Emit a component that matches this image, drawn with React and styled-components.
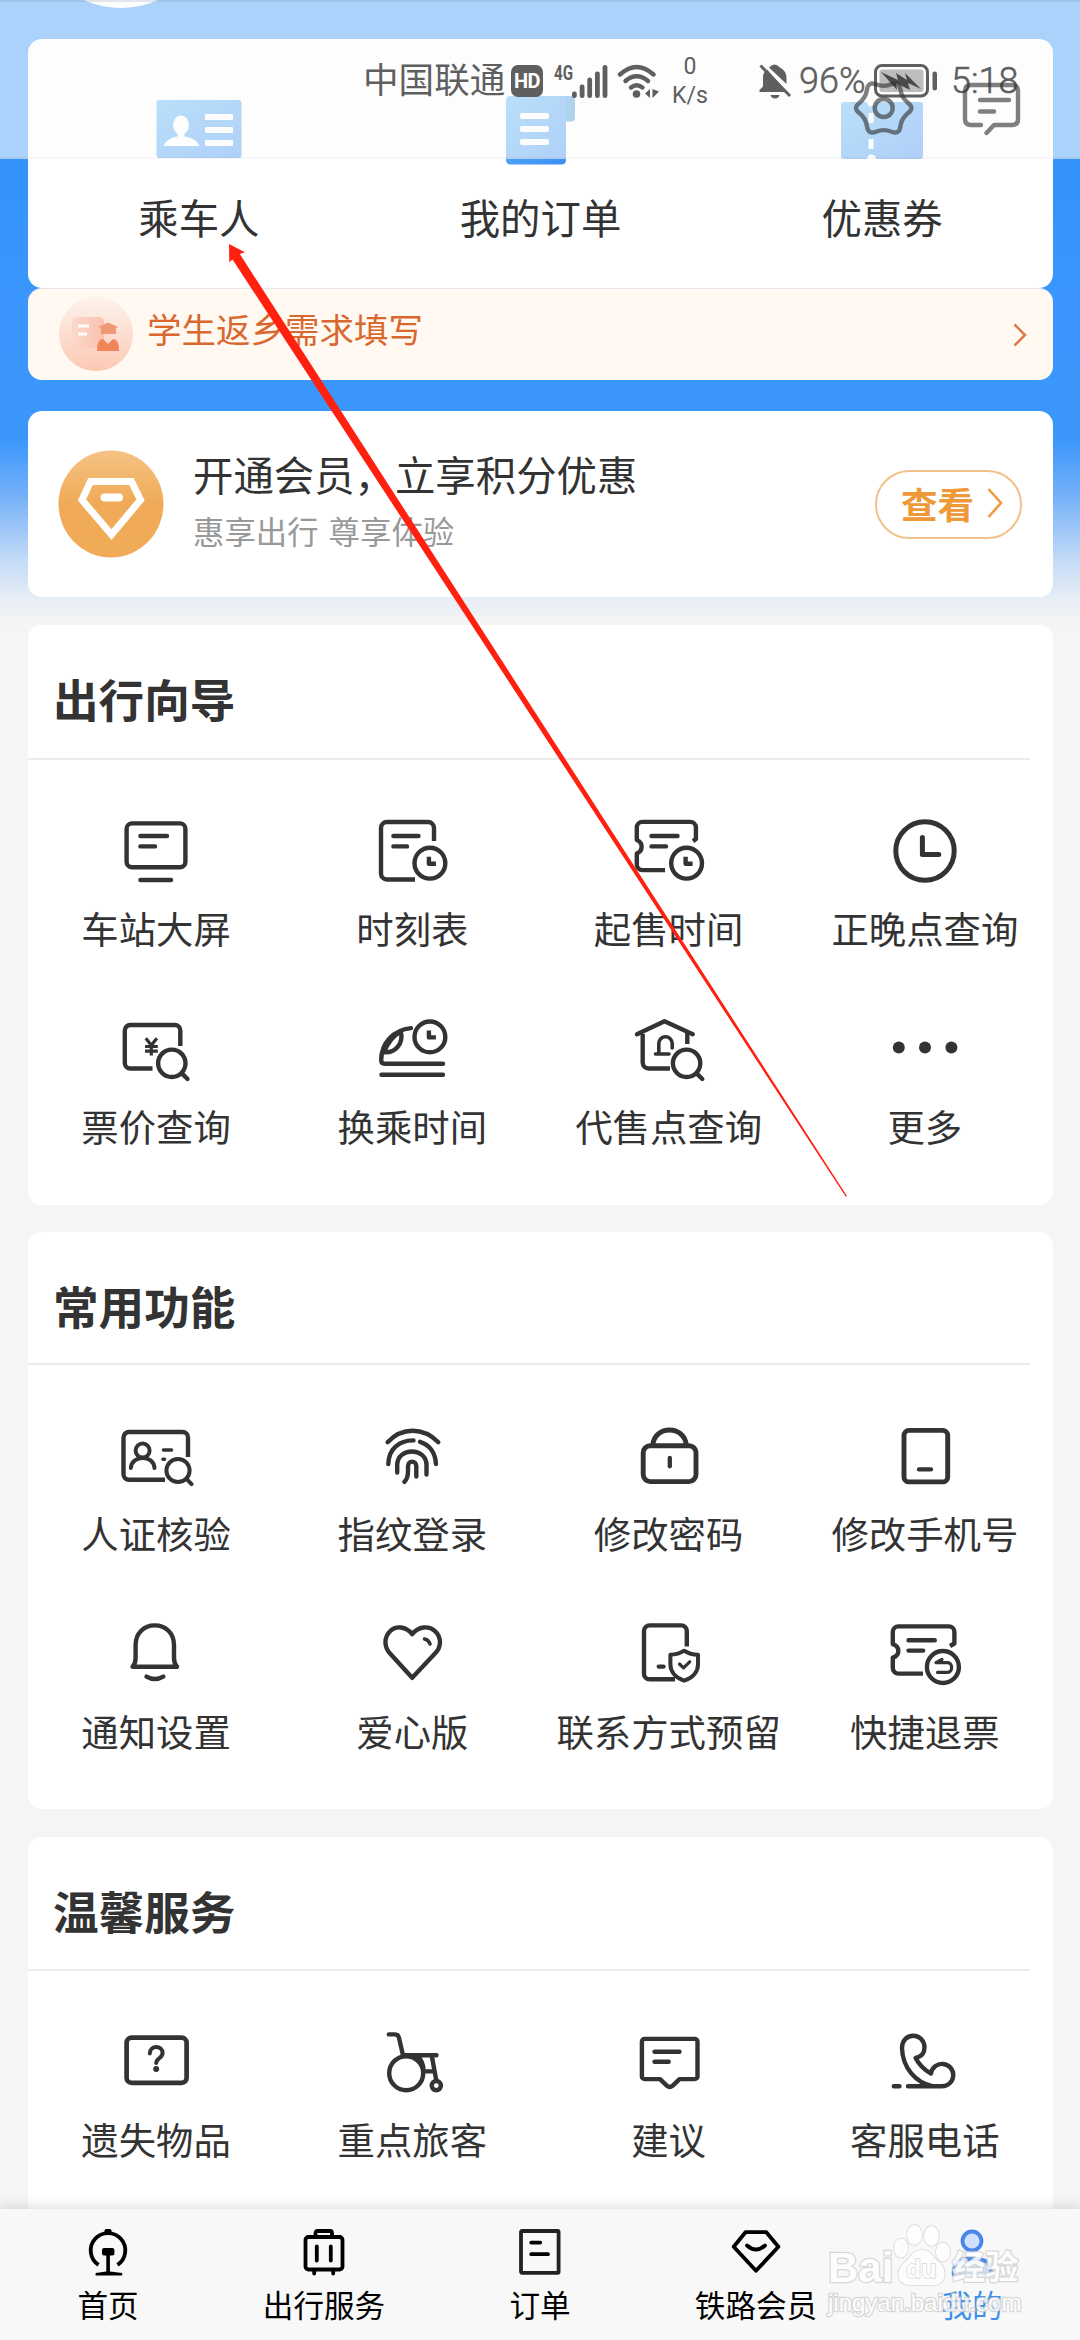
import styled, { createGlobalStyle } from 'styled-components';

const GlobalStyle = createGlobalStyle`
  * {
    box-sizing: border-box;
  }
  body {
    margin: 0;
    background-color: #f5f5f5;
    font-family: 'Noto Sans CJK SC', sans-serif;
    color: #333;
  }
`;

/* ---------- icons ---------- */

const LineIcon = styled.svg.attrs({ viewBox: '0 0 72 72' })`
  width: 72px;
  height: 72px;
  overflow: visible;
  fill: none;
  stroke: #333;
  stroke-width: ${props => props.$weight || 4.4};
  stroke-linecap: round;
  stroke-linejoin: round;
`;

const MiniClock = ({ x, y }) => (
  <g>
    <circle cx={x} cy={y} r="15.4" />
    <path d={`M${x - 1} ${y - 6.5}v7h7`} strokeLinecap="butt" />
  </g>
);

const Magnifier = ({ x, y, r = 13.7 }) => (
  <g>
    <circle cx={x} cy={y} r={r} />
    <path d={`M${x + r * 0.75} ${y + r * 0.75}L${x + r + 2} ${y + r + 2}`} />
  </g>
);

const ScreenIcon = () => (
  <LineIcon>
    <rect x="6.6" y="8.4" width="58.8" height="43.8" rx="5.5" />
    <path d="M20.4 21H47M20.4 31.4H35M20.4 65H51" />
  </LineIcon>
);

const TimetableIcon = () => (
  <LineIcon>
    <path d="M58 26V13a6 6 0 0 0-6-6H11a6 6 0 0 0-6 6v45.500a6 6 0 0 0 6 6H39" strokeLinecap="butt" />
    <path d="M17.400 21H42.500M17.400 31.400H31" />
    <MiniClock x={53.900} y={48.200} />
  </LineIcon>
);

const SaleTimeIcon = () => (
  <LineIcon>
    <path d="M60 26.200L62.900 24V12.500a5.600 5.600 0 0 0-5.600-5.600H9.400a5.600 5.600 0 0 0-5.600 5.600V25c6.400 2.500 6.400 11 0 13.500V49.500a5.600 5.600 0 0 0 5.600 5.600H32" strokeLinecap="butt" />
    <path d="M18.500 21H44.500M18.500 31.400H33" />
    <MiniClock x={53.600} y={48.200} />
  </LineIcon>
);

const ClockIcon = () => (
  <LineIcon $weight={5}>
    <circle cx="36" cy="36" r="29.200" />
    <path d="M33.400 22.500V39.400H49.800" />
  </LineIcon>
);

const PriceIcon = () => (
  <LineIcon>
    <path d="M60.300 33V17.500a5.500 5.500 0 0 0-5.500-5.500H10.300a5.500 5.500 0 0 0-5.500 5.500V50a5.500 5.500 0 0 0 5.500 5.500H32.500" strokeLinecap="butt" />
    <path d="M25.800 25.200L31.300 32.300L36.900 25.200M31.300 32.300V42.500M25 33.500H37.800M25 38.200H37.800" strokeWidth="3.200" strokeLinecap="butt" />
    <Magnifier x={51.800} y={50.300} />
  </LineIcon>
);

const TransferIcon = () => (
  <LineIcon>
    <path d="M35 15.100C17 17 5.200 30 5.200 47c0 2.500 1.300 3.700 3.600 3.700H67M5.400 61.800H67" />
    <path d="M24.800 18.500C28 31 18.500 40.500 8 39.300C11 31.500 16.500 23 24.800 18.500" />
    <MiniClock x={53.900} y={23.900} />
  </LineIcon>
);

const AgencyIcon = () => (
  <LineIcon>
    <path d="M4 21.200L31.500 8.300L59.800 21.200" />
    <path d="M9.700 21V49.500a6 6 0 0 0 6 6H37M54.300 20V31" strokeLinecap="butt" />
    <path d="M25.800 40V30.500a6.700 6.700 0 0 1 13.400 0V35M22.500 41H36" strokeWidth="3.600" />
    <Magnifier x={53.600} y={50.300} />
  </LineIcon>
);

const MoreIcon = () => (
  <LineIcon>
    <g fill="#333" stroke="none">
      <circle cx="9.800" cy="34.600" r="6" />
      <circle cx="36" cy="34.600" r="6" />
      <circle cx="62.400" cy="34.600" r="6" />
    </g>
  </LineIcon>
);

const VerifyIcon = () => (
  <LineIcon $weight={4}>
    <path d="M68 37V17.500a5.500 5.500 0 0 0-5.500-5.500H9a5.500 5.500 0 0 0-5.500 5.500V54.300a5.500 5.500 0 0 0 5.500 5.500H45" strokeLinecap="butt" strokeWidth="4.400" />
    <circle cx="22.600" cy="30.600" r="7" />
    <path d="M10.800 48C12 34.500 33.500 34.500 34.500 48" />
    <path d="M43.500 30H51.500M43 39.300h1.500" strokeWidth="3.600" />
    <Magnifier x={58} y={50.500} r={11.600} />
  </LineIcon>
);

const FingerprintIcon = () => (
  <LineIcon>
    <path d="M11.600 22.200C26 7 47 7 62.300 22.200" />
    <path d="M12.300 44C12.500 29 23 20.300 37.500 20.400M44 21.800C53.500 24.500 59.500 33 59.900 44" />
    <path d="M21.200 52.500V45c0-18 29.300-18 29.300 0v9.500" />
    <path d="M28.400 61.800C31.500 59 32 55 32 51V46c0-5.800 8.300-5.800 8.300 0V56.500" />
  </LineIcon>
);

const LockIcon = () => (
  <LineIcon $weight={4.900}>
    <rect x="10.200" y="25.800" width="52.800" height="35.800" rx="7" />
    <path d="M19.800 25C21.500 5 51.500 5 53.300 25" />
    <path d="M36.800 37.800V46.300" strokeWidth="4.300" />
  </LineIcon>
);

const PhoneIcon = () => (
  <LineIcon $weight={4.900}>
    <rect x="15" y="10.400" width="43.700" height="51.500" rx="5" />
    <path d="M30 49.400H42" strokeWidth="4.300" />
  </LineIcon>
);

const BellIcon = () => (
  <LineIcon>
    <path d="M12.600 48.800C15.600 45.500 15.600 43 15.600 40V27C15.600 15 24 7.400 34.800 7.400S54 15 54 27V40C54 43 54 45.500 57 48.800Z" />
    <path d="M26.500 58.600Q34.800 63.500 43.300 58.600" />
  </LineIcon>
);

const HeartIcon = () => (
  <LineIcon>
    <path d="M36.200 16.200C30 8.500 20 7.300 14.500 12.800C7.500 19.500 8 29.500 14.500 36L36.200 59.800L58.500 36C65.500 29.500 66 19.500 58.800 12.800C52.500 7.300 42.500 8.500 36.200 16.200Z" />
    <path d="M48.500 21Q52.800 22 54 26" strokeWidth="3.600" />
  </LineIcon>
);

const ContactIcon = () => (
  <LineIcon>
    <path d="M53.800 28.500V13a5.600 5.600 0 0 0-5.600-5.600H16.600a5.600 5.600 0 0 0-5.600 5.600V55.700a5.600 5.600 0 0 0 5.600 5.600H42" strokeLinecap="butt" />
    <path d="M25.800 48.600H30.500" />
    <path d="M51.200 32.700C47 35.500 42 36.700 37.400 36.800V46.500C37.400 54 43 60 51.200 62.700C59.500 60 65 54 65 46.500V36.800C60 36.700 55.500 35.500 51.200 32.700Z" strokeWidth="4" />
    <path d="M46.500 46L50.500 49.800L56.700 43.800" strokeWidth="3.200" />
  </LineIcon>
);

const RefundIcon = () => (
  <LineIcon>
    <path d="M61 28L65.400 25.500V14a5.600 5.600 0 0 0-5.600-5.600H9.400a5.600 5.600 0 0 0-5.600 5.600V26.200c7.400 2.500 7.400 11 0 13.500V50a5.600 5.600 0 0 0 5.600 5.600H34" strokeLinecap="butt" />
    <path d="M19.500 22.200H45.800M19.500 32.600H34.200" />
    <circle cx="53.900" cy="49" r="16" />
    <path d="M47.500 44.600H58.500c5.500 0 5.500 9.800 0 9.800H48.500M47 44.600L53 41.500" strokeWidth="3.200" />
  </LineIcon>
);

const LostIcon = () => (
  <LineIcon $weight={4.700}>
    <rect x="6.600" y="11.600" width="60" height="45.200" rx="5" />
    <path d="M29.800 27.500C29.800 19 42.600 19 42.600 27C42.600 32 36.200 32.500 36.200 37" strokeWidth="4" />
    <circle cx="36.200" cy="43" r="3" fill="#333" stroke="none" />
  </LineIcon>
);

const WheelchairIcon = () => (
  <LineIcon>
    <circle cx="30.200" cy="47.200" r="17" />
    <path d="M12.800 8.400H19c2.800 0 3.500 1.200 4 3.500L27 29.200H60.500M55.800 30L60.200 54M48 45.400H57.500M42 30.500C45.500 34 47 38 47.500 43" />
    <circle cx="60.300" cy="59.600" r="4.600" />
  </LineIcon>
);

const AdviceIcon = () => (
  <LineIcon>
    <path d="M11.600 12.900H61.800a2.700 2.700 0 0 1 2.700 2.700V50.400a2.700 2.700 0 0 1-2.700 2.700H46.500L39.500 59.800Q36.700 62 34 59.800L27 53.100H11.600a2.700 2.700 0 0 1-2.700-2.700V15.600a2.700 2.700 0 0 1 2.700-2.700Z" />
    <path d="M21.500 25.700H46.500M21.500 35.700H35.700" />
  </LineIcon>
);

const CallIcon = () => (
  <LineIcon>
    <path d="M19 60.300H53A11.200 11.200 0 1 0 42 47.500C35.500 44 30 38.500 26.600 32C33 30.500 35.500 26 35.500 21.500C35.500 14.500 30.300 9.800 24.500 9.800C17.500 9.800 13 15 13 22C13.500 42 27 57 44 60.300M4.800 60.300H10.500" />
  </LineIcon>
);

const TabIcon = styled.svg.attrs({ viewBox: '0 0 48 48' })`
  width: 48px;
  height: 48px;
  overflow: visible;
  fill: none;
  stroke: ${props => (props.$active ? '#4a86ea' : '#000')};
  stroke-width: 3.8;
  stroke-linecap: round;
  stroke-linejoin: round;
`;

const HomeTab = () => (
  <TabIcon>
    <path d="M14.500 36.800A17.300 17.300 0 1 1 33.500 36.800" strokeLinecap="butt" />
    <g fill="#000" stroke="none">
      <rect x="20.400" y="1" width="7.200" height="5" rx="2" />
      <rect x="18" y="20" width="12.400" height="7.500" rx="2" />
      <path d="M22.300 26h3.600v17.500l12.300 1.500v2.500H11.600V45l10.700-1.500z" />
    </g>
  </TabIcon>
);

const LuggageTab = () => (
  <TabIcon>
    <rect x="5.500" y="9" width="37" height="32.500" rx="3" />
    <path d="M15.500 8V5q0-2 2-2H30q2 0 2 2V8M16.800 18.500V32.500M30.800 18.500V32.500M14.200 43v2.500M33.200 43v2.500" />
  </TabIcon>
);

const OrderTab = () => (
  <TabIcon>
    <rect x="5" y="3" width="37.600" height="41.800" rx="1" stroke="#222" />
    <path d="M15.200 14.600H24.200M15.200 26.200H32" />
  </TabIcon>
);

const MemberTab = () => (
  <TabIcon>
    <path d="M13.500 4.200H34.300L46.400 18.700L24 42.800L1.700 18.700Z" />
    <path d="M15 17.500Q24 25.500 33 17.500" />
  </TabIcon>
);

const MineTab = () => (
  <TabIcon $active>
    <circle cx="24" cy="13" r="9.500" fill="#cfe0fc" />
    <path d="M5.500 46.500C6.500 36 10 32.500 17 31.500H30C38 32.500 42 36 43 46.500Z" fill="#cfe0fc" stroke="none" />
    <path d="M5.500 46C6 36 10 31.500 17 31H30C38 31.500 42 36 43 43" />
  </TabIcon>
);

/* ---------- page ---------- */

const Page = styled.div`
  position: relative;
  width: 1080px;
  height: 2340px;
  overflow: hidden;
  display: flex;
  flex-direction: column;
  background: linear-gradient(
    #3393f8 0px,
    #3393f8 159px,
    #3a96fd 300px,
    #3c97fc 440px,
    #74b0f8 495px,
    #c3dbf7 560px,
    #e8eef5 600px,
    #f5f5f5 625px
  );
`;

const Avatar = styled.div`
  position: absolute;
  top: -172px;
  left: 31px;
  width: 180px;
  height: 180px;
  border-radius: 50%;
  background-color: #fff;
`;

const Content = styled.main`
  flex: 1;
  min-height: 0;
  overflow: hidden;
  padding: 39px 27px 0 28px;
  display: flex;
  flex-direction: column;
`;

const Card = styled.section`
  flex: none;
  height: ${props => props.$height}px;
  margin-bottom: ${props => props.$gap || 0}px;
  border-radius: 14px;
  background-color: #fff;
`;

const Shortcuts = styled(Card)`
  display: grid;
  grid-template-columns: repeat(3, 1fr);
`;

const Shortcut = styled.div`
  display: flex;
  flex-direction: column;
  align-items: center;
  padding-top: 54px;
  gap: 22px;
  font-size: 40.4px;
  line-height: 60px;
`;

const ShortcutIcon = styled.svg`
  width: 90px;
  height: 72px;
  overflow: visible;
`;

const Banner = styled(Card)`
  display: flex;
  padding: 0 26px 0 30px;
  background-color: #fff9f2;
  border-top: 1px solid #e4e6ea;
`;

const BannerIcon = styled.svg`
  width: 76px;
  height: 76px;
  margin-top: 7px;
`;

const BannerText = styled.span`
  flex: 1;
  padding: 14px 0 0 13px;
  color: #d9682f;
  font-size: 34.5px;
  line-height: 50px;
`;

const Chevron = styled.svg`
  width: ${props => props.$width}px;
  height: ${props => props.$height}px;
  align-self: center;
  fill: none;
  stroke: ${props => props.color};
  stroke-width: 2.6;
`;

const Vip = styled(Card)`
  display: flex;
  align-items: center;
  padding: 0 31px 0 30px;
`;

const VipBadge = styled.svg`
  width: 106px;
  height: 108px;
`;

const VipText = styled.div`
  flex: 1;
  padding-left: 29px;
  margin-top: -7px;
`;

const VipTitle = styled.div`
  font-size: 40.4px;
  line-height: 60px;
`;

const VipSubtitle = styled.div`
  color: #999;
  font-size: 31.4px;
  line-height: 54px;
  word-spacing: 3px;
`;

const ViewButton = styled.button`
  display: flex;
  align-items: center;
  gap: 13px;
  width: 147px;
  height: 69px;
  padding: 0 0 2px 24px;
  border: 2px solid #f2c08a;
  border-radius: 35px;
  background: none;
  color: #ee9838;
  font-family: inherit;
  font-size: 36.5px;
  font-weight: 700;
`;

const SectionTitle = styled.h2`
  height: ${props => props.$height}px;
  margin: 0 23px 0 0;
  padding: 43px 0 0 25px;
  border-bottom: 2px solid #ebebeb;
  font-size: 45.6px;
  line-height: 60px;
  font-weight: 700;
`;

const Grid = styled.div`
  display: grid;
  grid-template-columns: repeat(4, 1fr);
  row-gap: 60px;
  padding-top: 55px;
`;

const Cell = styled.div`
  display: flex;
  flex-direction: column;
  align-items: center;
  gap: 16px;
  font-size: 37.4px;
  line-height: 50px;
  white-space: nowrap;
`;

const TabBar = styled.nav`
  position: relative;
  flex: none;
  display: grid;
  grid-template-columns: repeat(5, 1fr);
  height: 131px;
  padding-top: 19px;
  background-color: #f8f8f8;
  box-shadow: 0 -2px 12px rgba(0, 0, 0, 0.14);
`;

const Tab = styled.div`
  display: flex;
  flex-direction: column;
  align-items: center;
  gap: 6px;
  color: ${props => (props.$active ? '#3f8fe6' : '#000')};
  font-size: 30.6px;
  line-height: 44px;
`;

/* ---------- floating header and status bar ---------- */

const Header = styled.header`
  position: absolute;
  top: 0;
  left: 0;
  width: 1080px;
  height: 159px;
  background-color: rgba(252, 252, 252, 0.6);
  border-top: 2px solid rgba(120, 140, 170, 0.2);
  box-shadow: inset 0 -2px 1px rgba(0, 0, 0, 0.03);
`;

const StatusBar = styled.div`
  display: flex;
  align-items: center;
  height: 52px;
  margin: 53px 0 0 363px;
  color: #5f5f5f;
  font-family: Roboto, 'Noto Sans CJK SC', sans-serif;
  line-height: 52px;
  white-space: nowrap;
`;

const Carrier = styled.span`
  width: 143px;
  font-size: 35.6px;
`;

const HdBadge = styled.span`
  width: 32px;
  height: 32px;
  margin-left: 5px;
  border-radius: 7px;
  background-color: #5f5f5f;
  color: #fff;
  font-size: 20px;
  font-weight: 700;
  letter-spacing: -0.5px;
  line-height: 33px;
  text-align: center;
`;

const StatusGlyphs = styled.svg`
  width: 106px;
  height: 36px;
  margin-left: 11px;
`;

const NetSpeed = styled.span`
  width: 40px;
  margin-left: 10px;
  font-size: 23px;
  line-height: 29px;
  text-align: center;
`;

const MutedBell = styled.svg`
  width: 32px;
  height: 36px;
  margin-left: 49px;
`;

const Percent = styled.span`
  width: 68px;
  margin-left: 8px;
  font-size: 36px;
  font-weight: 300;
  -webkit-text-stroke: 0.5px #5f5f5f;
`;

const Battery = styled.svg`
  width: 64px;
  height: 34px;
  margin-left: 7px;
`;

const Time = styled.span`
  margin-left: 13px;
  font-weight: 300;
  font-size: 36px;
  -webkit-text-stroke: 0.5px #5f5f5f;
`;

const HeaderActions = styled.svg`
  position: absolute;
  top: 76px;
  left: 850px;
  width: 180px;
  height: 62px;
  fill: none;
  stroke: rgba(50, 50, 50, 0.62);
  stroke-width: 4.4;
  stroke-linecap: round;
  stroke-linejoin: round;
`;

const Arrow = styled.svg`
  position: absolute;
  top: 0;
  left: 0;
  width: 1080px;
  height: 1240px;
  fill: #ff2010;
  pointer-events: none;
`;

/* ---------- watermark ---------- */

const Watermark = styled.div`
  position: absolute;
  left: 828px;
  top: 2220px;
  width: 196px;
  color: #fff;
  font-family: 'Liberation Sans', 'Noto Sans CJK SC', sans-serif;
  font-weight: 700;
  paint-order: stroke fill;
  -webkit-text-stroke: 2.5px #d2d2d2;
  opacity: 0.85;
`;

const Brand = styled.div`
  display: flex;
  align-items: flex-end;
  height: 66px;
  font-size: 42px;
  line-height: 36px;
`;

const Paw = styled.svg`
  width: 58px;
  height: 66px;
  margin-right: 1px;
  overflow: visible;
  fill: #fff;
  stroke: #d2d2d2;
  stroke-width: 1.5;
`;

const BrandSuffix = styled.span`
  font-size: 33px;
`;

const Domain = styled.div`
  font-size: 24px;
  line-height: 34px;
  font-weight: 400;
`;

const guide = [
  ['车站大屏', ScreenIcon],
  ['时刻表', TimetableIcon],
  ['起售时间', SaleTimeIcon],
  ['正晚点查询', ClockIcon],
  ['票价查询', PriceIcon],
  ['换乘时间', TransferIcon],
  ['代售点查询', AgencyIcon],
  ['更多', MoreIcon],
];

const common = [
  ['人证核验', VerifyIcon],
  ['指纹登录', FingerprintIcon],
  ['修改密码', LockIcon],
  ['修改手机号', PhoneIcon],
  ['通知设置', BellIcon],
  ['爱心版', HeartIcon],
  ['联系方式预留', ContactIcon],
  ['快捷退票', RefundIcon],
];

const service = [
  ['遗失物品', LostIcon],
  ['重点旅客', WheelchairIcon],
  ['建议', AdviceIcon],
  ['客服电话', CallIcon],
];

const tabs = [
  ['首页', HomeTab],
  ['出行服务', LuggageTab],
  ['订单', OrderTab],
  ['铁路会员', MemberTab],
  ['我的', MineTab],
];

const Section = ({ title, items, height, gap, titleHeight }) => (
  <Card $height={height} $gap={gap}>
    <SectionTitle $height={titleHeight}>{title}</SectionTitle>
    <Grid>
      {items.map(([label, Icon]) => (
        <Cell key={label}>
          <Icon />
          {label}
        </Cell>
      ))}
    </Grid>
  </Card>
);

export default function App() {
  return (
    <Page>
      <GlobalStyle />
      <Avatar />
      <Content>
        <Shortcuts $height={249}>
          <Shortcut>
            <ShortcutIcon viewBox="0 0 90 72">
              <defs>
                <linearGradient id="blue" x1="0" y1="0" x2="1" y2="1">
                  <stop offset="0" stopColor="#56b4f6" />
                  <stop offset="1" stopColor="#3d8ef5" />
                </linearGradient>
              </defs>
              <rect x="2.500" y="7" width="85" height="58" rx="3" fill="url(#blue)" />
              <g fill="#fff">
                <ellipse cx="27" cy="32" rx="8" ry="9.500" />
                <path d="M23.500 36h7v7.500c8 1.500 13 4 15 9.500H9.500c2-5.500 7-8 14-9.500z" />
                <rect x="51" y="21" width="28" height="6" rx="1" />
                <rect x="51" y="34" width="28" height="6" rx="1" />
                <rect x="51" y="47" width="28" height="6" rx="1" />
              </g>
            </ShortcutIcon>
            乘车人
          </Shortcut>
          <Shortcut>
            <ShortcutIcon viewBox="0 0 90 72">
              <path d="M68 3h8q4 0 4 4v18q0 3.500-3 3.500h-9z" fill="#3c97d8" />
              <path d="M15 3H71V67q0 4.500-5 4.500H16q-5 0-5-4.500V7q0-4 4-4z" fill="url(#blue)" />
              <g fill="#fff">
                <rect x="25" y="20" width="29" height="6" rx="2" />
                <rect x="25" y="33" width="29" height="6" rx="2" />
                <rect x="25" y="46" width="29" height="6" rx="2" />
              </g>
            </ShortcutIcon>
            我的订单
          </Shortcut>
          <Shortcut>
            <ShortcutIcon viewBox="0 0 90 72">
              <path d="M7 9H30a4.500 4.500 0 0 0 9 0H83q3 0 3 3V63q0 3-3 3H39a4.500 4.500 0 0 0-9 0H7q-3 0-3-3V12q0-3 3-3z" fill="url(#blue)" />
              <path d="M34 20V58" stroke="#fff" strokeWidth="5" strokeDasharray="10 16" />
            </ShortcutIcon>
            优惠券
          </Shortcut>
        </Shortcuts>

        <Banner $height={92} $gap={31}>
          <BannerIcon viewBox="0 0 76 76">
            <defs>
              <linearGradient id="peach" x1="0" y1="0" x2="0" y2="1">
                <stop offset="0" stopColor="#fdf3ec" />
                <stop offset="1" stopColor="#fcc9b4" />
              </linearGradient>
              <linearGradient id="coral" x1="0" y1="0" x2="1" y2="0">
                <stop offset="0" stopColor="#fcd8ca" />
                <stop offset="1" stopColor="#fac2af" />
              </linearGradient>
            </defs>
            <circle cx="38" cy="38" r="37" fill="url(#peach)" />
            <rect x="14" y="21" width="32" height="31" rx="5" fill="url(#coral)" />
            <path d="M20 30h11M20 38h9" stroke="#fff" strokeWidth="3" />
            <path d="M40 31l10-4.500 10 4.500-2 1v6H43v-6z" fill="#ee9a76" />
            <path d="M39 55q0-12 6-12l5 5 5-5q6 0 6 12z" fill="#f0855a" />
          </BannerIcon>
          <BannerText>学生返乡需求填写</BannerText>
          <Chevron viewBox="0 0 14 24" $width={14} $height={24} color="#e07848">
            <path d="M1.500 1.500L12 12L1.500 22.500" />
          </Chevron>
        </Banner>

        <Vip $height={186} $gap={28}>
          <VipBadge viewBox="0 0 106 108">
            <defs>
              <linearGradient id="gold" x1="0" y1="0" x2="0" y2="1">
                <stop offset="0" stopColor="#f4c384" />
                <stop offset="0.5" stopColor="#f0aa57" />
                <stop offset="1" stopColor="#f1ac58" />
              </linearGradient>
            </defs>
            <ellipse cx="53" cy="54" rx="52.500" ry="53.500" fill="url(#gold)" />
            <path d="M32.500 31.500H73.500L82.500 50L53.500 84.500L24 50Z" fill="none" stroke="#fff" strokeWidth="7" />
            <path d="M46.500 47.500H61" stroke="#fff" strokeWidth="8" strokeLinecap="round" />
          </VipBadge>
          <VipText>
            <VipTitle>开通会员，立享积分优惠</VipTitle>
            <VipSubtitle>惠享出行 尊享体验</VipSubtitle>
          </VipText>
          <ViewButton>
            查看
            <Chevron viewBox="0 0 16 32" $width={16} $height={32} color="#ee9a3e">
              <path d="M1.500 2L14 16L1.500 30" />
            </Chevron>
          </ViewButton>
        </Vip>

        <Section title="出行向导" items={guide} height={580} gap={27} titleHeight={135} />
        <Section title="常用功能" items={common} height={577} gap={28} titleHeight={133} />
        <Section title="温馨服务" items={service} height={400} gap={0} titleHeight={134} />
      </Content>

      <TabBar>
        {tabs.map(([label, Icon]) => (
          <Tab key={label} $active={label === '我的'}>
            <Icon />
            {label}
          </Tab>
        ))}
      </TabBar>

      <Header>
        <StatusBar>
          <Carrier>中国联通</Carrier>
          <HdBadge>HD</HdBadge>
          <StatusGlyphs viewBox="0 0 106 36" fill="#5f5f5f">
            <text x="0" y="16.500" fontSize="20.500" fontWeight="700" textLength="19" lengthAdjust="spacingAndGlyphs">4G</text>
            <rect x="18" y="28.500" width="4.800" height="6.500" rx="2.300" />
            <rect x="25.700" y="21.500" width="4.800" height="13.500" rx="2.300" />
            <rect x="33.300" y="14.500" width="4.800" height="20.500" rx="2.300" />
            <rect x="41" y="8.500" width="4.800" height="26.500" rx="2.300" />
            <rect x="48.600" y="2" width="4.800" height="33" rx="2.300" />
            <g fill="none" stroke="#5f5f5f" strokeWidth="4.400" strokeLinecap="round">
              <path d="M66 11.500Q82.500-3.500 99.500 11.500" />
              <path d="M71.500 18Q82.500 8.500 94 18" />
              <path d="M77 24.500Q82.500 20 88.500 24.500" />
            </g>
            <circle cx="82.500" cy="31" r="3.800" />
            <path d="M96 26v9l-5-4.500zM98.500 26l6.500 2.500-6.500 6.500z" />
          </StatusGlyphs>
          <NetSpeed>
            0<br />K/s
          </NetSpeed>
          <MutedBell viewBox="0 0 32 36" fill="#5f5f5f">
            <path d="M8 6.500L28 29H0.500V27L4 23.500V14q0-4.500 4-7.500zM10 4.500Q13 1.500 15.500 1.500T21 4.500Q27.500 8 27.500 15V21z" />
            <path d="M11.500 32h9q-1 3.500-4.500 3.500t-4.500-3.500z" />
            <path d="M1.500 2.500L31 33" stroke="#5f5f5f" strokeWidth="3" />
          </MutedBell>
          <Percent>96%</Percent>
          <Battery viewBox="0 0 64 34">
            <rect x="1.500" y="1.500" width="52" height="30.500" rx="6.500" fill="none" stroke="#5f5f5f" strokeWidth="3" />
            <rect x="5.500" y="5.500" width="44" height="22.500" rx="2.500" fill="#bdbdbd" />
            <path d="M7 8L24 16L22 9L33 16L31 9L47 25L34 19L36 26L22 19L23 26Z" fill="#4a4a4a" />
            <rect x="58.500" y="7.500" width="4.500" height="19" rx="2.200" fill="#5f5f5f" />
          </Battery>
          <Time>5:18</Time>
        </StatusBar>
        <HeaderActions viewBox="0 0 180 62">
          <path d="M58.100 24.900Q64.700 30 58.100 35.100Q51.500 40.300 50.400 48.500Q49.200 56.800 41.500 53.700Q33.700 50.500 26 53.700Q18.200 56.800 17 48.500Q15.900 40.300 9.300 35.100Q2.700 30 9.300 24.900Q15.900 19.700 17 11.500Q18.200 3.200 26 6.300Q33.700 9.500 41.500 6.300Q49.200 3.200 50.400 11.500Q51.500 19.700 58.100 24.900Z" />
          <circle cx="33.700" cy="30" r="9" />
          <path d="M131 47H121q-6 0-6-6V13q0-6 6-6h41q6 0 6 6V41q0 6-6 6H144l-7.500 8M130 22h29M130 33.500h14" />
        </HeaderActions>
      </Header>

      <Watermark>
        <Brand>
          Bai
          <Paw viewBox="0 0 58 66">
            <ellipse cx="8" cy="28" rx="7" ry="9.500" />
            <ellipse cx="21.500" cy="15" rx="7.500" ry="10" />
            <ellipse cx="38.500" cy="16" rx="7.500" ry="10" />
            <ellipse cx="50" cy="32" rx="7" ry="9.500" />
            <path d="M29 30C39 30 41 39 47 43C54 49 54 65 41 65H17C3 65 3 50 10 44C17 39 19 30 29 30Z" />
            <text x="13" y="58" fontSize="25">du</text>
          </Paw>
          <BrandSuffix>经验</BrandSuffix>
        </Brand>
        <Domain>jingyan.baidu.com</Domain>
      </Watermark>

      <Arrow viewBox="0 0 1080 1240">
        <path d="M229 244L244.800 252.300L239.800 254L846.900 1196L845.800 1196.800L232.500 259.500L229.300 262.300Z" />
      </Arrow>
    </Page>
  );
}
